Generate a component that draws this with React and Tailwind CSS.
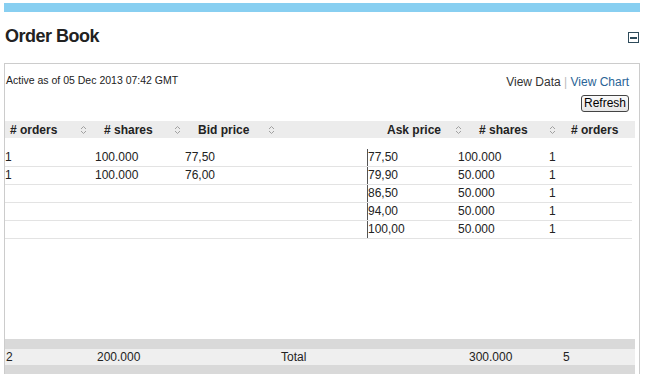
import React from 'react'

const bids = [
  { orders: '1', shares: '100.000', price: '77,50' },
  { orders: '1', shares: '100.000', price: '76,00' },
]

const asks = [
  { price: '77,50', shares: '100.000', orders: '1' },
  { price: '79,90', shares: '50.000', orders: '1' },
  { price: '86,50', shares: '50.000', orders: '1' },
  { price: '94,00', shares: '50.000', orders: '1' },
  { price: '100,00', shares: '50.000', orders: '1' },
]

function SortIcon() {
  return (
    <svg width="7" height="10" viewBox="0 0 7 10" className="shrink-0">
      <path d="M1 4 L3.5 1.5 L6 4" fill="none" stroke="#a0a0a0" strokeWidth="1" />
      <path d="M1 6 L3.5 8.5 L6 6" fill="none" stroke="#a0a0a0" strokeWidth="1" />
    </svg>
  )
}

function HeadCell({ label, width, pr = 'pr-[12px]', sort = true }) {
  return (
    <div className={`flex items-center justify-between pl-[5px] ${pr} ${width}`}>
      <span>{label}</span>
      {sort && <SortIcon />}
    </div>
  )
}

function App() {
  const rows = Array.from({ length: 5 }, (_, i) => ({ bid: bids[i], ask: asks[i] }))

  return (
    <div className="w-[646px] h-[374px] overflow-hidden bg-white text-[#222] font-['Liberation_Sans',Arial,sans-serif]">
      <div className="ml-[4px] w-[636px]">
        {/* top accent bar */}
        <div className="mt-[3px] h-[9px] bg-[#88cff1]"></div>

        {/* title */}
        <div className="flex items-start justify-between mt-[13px] h-[22px]">
          <h1 className="pl-[1px] text-[18px] leading-[22px] font-bold tracking-[-0.5px] text-[#222]">Order Book</h1>
          <button className="mt-[7px] mr-[1px] w-[11px] h-[11px] border border-[#2e4b5b] bg-white flex items-center justify-center">
            <span className="block w-[7px] h-[2px] bg-[#2e4b5b]"></span>
          </button>
        </div>

        {/* panel */}
        <div className="mt-[16px] border border-[#cccccc] h-[340px]">
          <div className="flex justify-between items-start pr-[10px]">
            <div className="pt-[9px] pl-[1px] text-[10.5px] leading-[14px] text-[#222]">
              Active as of 05 Dec 2013 07:42 GMT
            </div>
            <div className="flex flex-col items-end mt-[10px]">
              <div className="text-[12px] leading-[16px] text-[#333]">
                View Data <span className="text-[#bbb]">|</span>{' '}
                <span className="text-[#2a6496]">View Chart</span>
              </div>
              <button className="mt-[5px] h-[17px] px-[2px] border border-[#444] rounded-[3px] bg-gradient-to-b from-[#fafafa] to-[#e6e6e6] text-[12px] leading-[15px] text-black">
                Refresh
              </button>
            </div>
          </div>

          <div className="mr-[4px]">
            {/* column headings */}
            <div className="mt-[9px] h-[17px] flex items-center bg-[#ececec] text-[12px] font-bold text-[#222]">
              <HeadCell label="# orders" width="w-[94px]" />
              <HeadCell label="# shares" width="w-[94px]" />
              <HeadCell label="Bid price" width="w-[94px]" />
              <div className="w-[95px]"></div>
              <HeadCell label="Ask price" width="w-[92px]" />
              <HeadCell label="# shares" width="w-[92px]" pr="pr-[10px]" />
              <HeadCell label="# orders" width="flex-1" sort={false} />
            </div>

            {/* bid / ask rows */}
            <div className="mt-[11px] h-[190px] text-[12px] leading-[14px] text-[#222]">
              {rows.map((r, i) => (
                <div key={i} className="h-[18px] flex border-b border-[#e3e3e3] mr-[3px]">
                  <div className="w-[362px] flex pt-[1px]">
                    <div className="w-[90px]">{r.bid?.orders}</div>
                    <div className="w-[90px]">{r.bid?.shares}</div>
                    <div className="w-[90px]">{r.bid?.price}</div>
                  </div>
                  <div className="flex-1 flex border-l border-[#555] pt-[1px]">
                    <div className="w-[90px]">{r.ask?.price}</div>
                    <div className="w-[91px]">{r.ask?.shares}</div>
                    <div className="flex-1">{r.ask?.orders}</div>
                  </div>
                </div>
              ))}
            </div>

            {/* totals */}
            <div className="bg-[#d9d9d9] pt-[10px] pb-[10px]">
              <div className="h-[16px] flex items-center bg-[#efefef] text-[12px] text-[#222]">
                <div className="w-[90px] pl-[1px]">2</div>
                <div className="w-[96px] pl-[2px]">200.000</div>
                <div className="w-[90px]"></div>
                <div className="w-[188px]">Total</div>
                <div className="w-[94px]">300.000</div>
                <div className="flex-1">5</div>
              </div>
            </div>
          </div>
        </div>
      </div>
    </div>
  )
}

export default App
